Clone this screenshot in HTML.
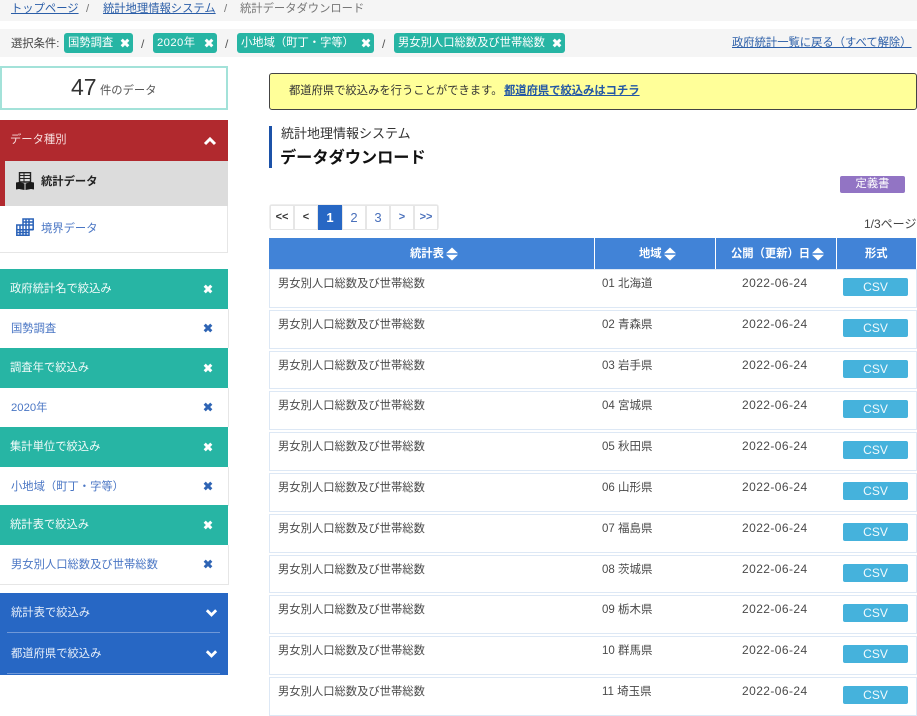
<!DOCTYPE html>
<html lang="ja"><head><meta charset="utf-8"><style>
html,body{margin:0;padding:0;background:#fff}
body{width:917px;height:714px;position:relative;overflow:hidden;font-family:"Liberation Sans","Noto Sans CJK JP",sans-serif;font-size:11.3px;color:#444}
.a{position:absolute;white-space:nowrap;line-height:16px}
.b{position:absolute}
a{color:#2b5ea8;text-decoration:underline}
.tag{position:absolute;top:33px;height:20px;background:#27b5a4;border-radius:3px;color:#fff;line-height:21px;padding-left:4px;box-sizing:border-box}
.x{position:absolute}
.s{position:absolute;top:36px;color:#555;line-height:16px;font-size:12px}
.h{position:absolute;left:0;width:228px;height:40px;background:#27b5a4;color:#f2fbfa;line-height:40px;text-indent:10px}
.i{position:absolute;left:0;width:228px;height:39px;background:#fff;border-right:1px solid #e6e6e6;box-sizing:content-box;color:#4a76c4;line-height:40px;text-indent:11px}
.row{position:absolute;left:269px;width:646px;height:36.8px;border:1px solid #dde8f5}
.row span{position:absolute;top:6px;line-height:16px;color:#4a4a4a;white-space:nowrap}
.row .c1{left:8px}.row .c2{left:332px;font-size:11.5px}.row .c3{left:472px;top:5px;font-size:12px;letter-spacing:.42px}
.row b{position:absolute;left:573px;top:8px;width:65px;height:18px;background:#45b2dc;border-radius:2px;color:#f2fafd;font-weight:normal;text-align:center;line-height:18px;font-size:12px}
.th{position:absolute;top:238px;height:31px;background:#4183d7}
.tt{position:absolute;top:246px;color:#fff;font-weight:bold;line-height:16px;white-space:nowrap}
.pg{position:absolute;top:205px;width:22px;height:23px;line-height:23px;text-align:center;border:1px solid #e6e6e6;color:#4a70bb;background:#fff;font-size:11px;font-weight:bold}
</style></head><body>

<div class="b" style="left:0;top:0;width:917px;height:21px;background:#f5f5f5"></div>
<div class="a" style="left:11px;top:1px"><a href="#">トップページ</a></div>
<div class="a" style="left:86px;top:1px;color:#777">/</div>
<div class="a" style="left:103px;top:1px"><a href="#">統計地理情報システム</a></div>
<div class="a" style="left:224px;top:1px;color:#777">/</div>
<div class="a" style="left:240px;top:1px;color:#777">統計データダウンロード</div>

<div class="b" style="left:0;top:29px;width:917px;height:28px;background:#f5f5f5"></div>
<div class="a" style="left:11px;top:36px;color:#444">選択条件:</div>
<div class="tag" style="left:64px;width:69px">国勢調査</div>
<svg class="x" style="left:120px;top:38px" width="10" height="10" viewBox="0 0 10 10"><path d="M1.700 1.700L8.300 8.300M8.300 1.700L1.700 8.300" stroke="#fff" stroke-width="3"/></svg>
<div class="s" style="left:141px">/</div>
<div class="tag" style="left:153px;width:64px"><span style="letter-spacing:.4px">2020</span>年</div>
<svg class="x" style="left:204px;top:38px" width="10" height="10" viewBox="0 0 10 10"><path d="M1.700 1.700L8.300 8.300M8.300 1.700L1.700 8.300" stroke="#fff" stroke-width="3"/></svg>
<div class="s" style="left:225px">/</div>
<div class="tag" style="left:237px;width:137px">小地域（町丁・字等）</div>
<svg class="x" style="left:361px;top:38px" width="10" height="10" viewBox="0 0 10 10"><path d="M1.700 1.700L8.300 8.300M8.300 1.700L1.700 8.300" stroke="#fff" stroke-width="3"/></svg>
<div class="s" style="left:382px">/</div>
<div class="tag" style="left:394px;width:171px">男女別人口総数及び世帯総数</div>
<svg class="x" style="left:552px;top:38px" width="10" height="10" viewBox="0 0 10 10"><path d="M1.700 1.700L8.300 8.300M8.300 1.700L1.700 8.300" stroke="#fff" stroke-width="3"/></svg>
<div class="a" style="left:732px;top:35px"><a href="#">政府統計一覧に戻る（すべて解除）</a></div>

<div class="b" style="left:0;top:66px;width:228px;height:44px;box-sizing:border-box;border:2px solid #a3e2d9;background:#fff"></div>
<div class="a" style="left:71px;top:74px;font-size:23px;line-height:26px;color:#333">47</div>
<div class="a" style="left:100px;top:83px;color:#555">件のデータ</div>

<div class="b" style="left:269px;top:73px;width:648px;height:37px;box-sizing:border-box;border:1px solid #444;border-radius:3px;background:#ffff99"></div>
<div class="a" style="left:289px;top:83px;color:#333">都道府県で絞込みを行うことができます。</div>
<div class="a" style="left:504px;top:83px"><a href="#" style="font-weight:bold;color:#2257a5">都道府県で絞込みはコチラ</a></div>

<div class="b" style="left:0;top:120px;width:228px;height:86px;background:#b1292e"></div>
<div class="a" style="left:10px;top:132px;color:#f6dcdc">データ種別</div>
<svg class="x" style="left:203px;top:136px" width="14" height="10" viewBox="0 0 14 10"><path d="M2 8L7 3L12 8" stroke="#fff" stroke-width="3" fill="none"/></svg>
<div class="b" style="left:5px;top:161px;width:223px;height:45px;background:#dcdcdc"></div>
<svg class="x" style="left:16px;top:172px" width="18" height="18" viewBox="0 0 18 18"><path d="M3.500 .7H14.500V10H3.500Z" fill="none" stroke="#222" stroke-width="1.400"/><path d="M3.500 3.500H14.500M3.500 6.500H14.500M8 1V10" stroke="#222" stroke-width="1"/><path d="M0 10.500L3 10L8.500 11.500V18L3 17L0 17.500ZM9.500 11.500L15 10L18 10.500V17.500L15 17L9.500 18Z" fill="#1a1a1a"/></svg>
<div class="a" style="left:41px;top:174px;font-weight:bold;color:#222">統計データ</div>
<div class="b" style="left:0;top:206px;width:228px;height:47px;background:#fff;border-right:1px solid #e6e6e6;border-bottom:1px solid #e6e6e6;box-sizing:border-box"></div>
<svg class="x" style="left:16px;top:218px" width="18" height="18" viewBox="0 0 18 18"><path d="M7 1H17.200V11.500H13V17.200H.8V7H7ZM.8 11.700H17M.8 14.500H13M.8 7H17M7 4H17M4 7V17M7 1V17M10 1V17M13 1V11.500" fill="none" stroke="#2a62b8" stroke-width="1.500"/></svg>
<div class="a" style="left:41px;top:221px;color:#4a76c4">境界データ</div>

<div class="h" style="top:269px">政府統計名で絞込み</div>
<svg class="x" style="left:203px;top:284px" width="10" height="10" viewBox="0 0 10 10"><path d="M1.700 1.700L8.300 8.300M8.300 1.700L1.700 8.300" stroke="#fff" stroke-width="3"/></svg>
<div class="i" style="top:309px">国勢調査</div>
<svg class="x" style="left:203px;top:323px" width="10" height="10" viewBox="0 0 10 10"><path d="M1.700 1.700L8.300 8.300M8.300 1.700L1.700 8.300" stroke="#2e64b4" stroke-width="3"/></svg>

<div class="h" style="top:348px">調査年で絞込み</div>
<svg class="x" style="left:203px;top:363px" width="10" height="10" viewBox="0 0 10 10"><path d="M1.700 1.700L8.300 8.300M8.300 1.700L1.700 8.300" stroke="#fff" stroke-width="3"/></svg>
<div class="i" style="top:388px">2020年</div>
<svg class="x" style="left:203px;top:402px" width="10" height="10" viewBox="0 0 10 10"><path d="M1.700 1.700L8.300 8.300M8.300 1.700L1.700 8.300" stroke="#2e64b4" stroke-width="3"/></svg>

<div class="h" style="top:427px">集計単位で絞込み</div>
<svg class="x" style="left:203px;top:442px" width="10" height="10" viewBox="0 0 10 10"><path d="M1.700 1.700L8.300 8.300M8.300 1.700L1.700 8.300" stroke="#fff" stroke-width="3"/></svg>
<div class="i" style="top:467px">小地域（町丁・字等）</div>
<svg class="x" style="left:203px;top:481px" width="10" height="10" viewBox="0 0 10 10"><path d="M1.700 1.700L8.300 8.300M8.300 1.700L1.700 8.300" stroke="#2e64b4" stroke-width="3"/></svg>

<div class="h" style="top:505px">統計表で絞込み</div>
<svg class="x" style="left:203px;top:520px" width="10" height="10" viewBox="0 0 10 10"><path d="M1.700 1.700L8.300 8.300M8.300 1.700L1.700 8.300" stroke="#fff" stroke-width="3"/></svg>
<div class="i" style="top:545px;border-bottom:1px solid #e6e6e6">男女別人口総数及び世帯総数</div>
<svg class="x" style="left:203px;top:559px" width="10" height="10" viewBox="0 0 10 10"><path d="M1.700 1.700L8.300 8.300M8.300 1.700L1.700 8.300" stroke="#2e64b4" stroke-width="3"/></svg>

<div class="b" style="left:0;top:593px;width:228px;height:82px;background:#2767c4"></div>
<div class="a" style="left:11px;top:605px;color:#e6eefa">統計表で絞込み</div>
<svg class="x" style="left:205px;top:608px" width="13" height="10" viewBox="0 0 14 10"><path d="M2 2L7 7L12 2" stroke="#fff" stroke-width="3" fill="none"/></svg>
<div class="b" style="left:7px;top:632px;width:213px;height:1px;background:#6f98d8"></div>
<div class="a" style="left:11px;top:646px;color:#e6eefa">都道府県で絞込み</div>
<svg class="x" style="left:205px;top:649px" width="13" height="10" viewBox="0 0 14 10"><path d="M2 2L7 7L12 2" stroke="#fff" stroke-width="3" fill="none"/></svg>
<div class="b" style="left:7px;top:673px;width:213px;height:1px;background:#6f98d8"></div>

<div class="b" style="left:269px;top:126px;width:3px;height:42px;background:#1c52a8"></div>
<div class="a" style="left:281px;top:126px;font-size:13px;color:#333">統計地理情報システム</div>
<div class="a" style="left:280px;top:148px;font-size:16.200px;line-height:20px;font-weight:bold;color:#111">データダウンロード</div>

<div class="b" style="left:840px;top:176px;width:65px;height:17px;background:#9274c4;border-radius:2px;color:#fff;text-align:center;line-height:17px">定義書</div>

<div class="b" style="left:269px;top:204px;width:170px;height:26px;border:1px solid #eee;border-radius:3px;box-sizing:border-box"></div>
<div class="pg" style="left:270px;color:#333">&lt;&lt;</div>
<div class="pg" style="left:294px;color:#333">&lt;</div>
<div class="pg" style="left:318px;background:#2767c4;color:#fff;font-size:13px;border-color:#2767c4">1</div>
<div class="pg" style="left:342px;font-size:13px;font-weight:normal">2</div>
<div class="pg" style="left:366px;font-size:13px;font-weight:normal">3</div>
<div class="pg" style="left:390px">&gt;</div>
<div class="pg" style="left:414px">&gt;&gt;</div>
<div class="a" style="left:864px;top:216px;font-size:12px;color:#444">1/3ページ</div>

<div class="th" style="left:269px;width:325px"></div>
<div class="th" style="left:595px;width:120px"></div>
<div class="th" style="left:716px;width:120px"></div>
<div class="th" style="left:837px;width:79px"></div>
<div class="tt" style="left:410px">統計表</div>
<div class="tt" style="left:639px">地域</div>
<div class="tt" style="left:731px">公開（更新）日</div>
<div class="tt" style="left:865px">形式</div>
<svg class="x" style="left:446px;top:247px" width="12" height="14" viewBox="0 0 12 14"><path d="M6 .5L12 6.300H0ZM6 13.500L0 7.700H12Z" fill="#fff"/></svg>
<svg class="x" style="left:664px;top:247px" width="12" height="14" viewBox="0 0 12 14"><path d="M6 .5L12 6.300H0ZM6 13.500L0 7.700H12Z" fill="#fff"/></svg>
<svg class="x" style="left:812px;top:247px" width="12" height="14" viewBox="0 0 12 14"><path d="M6 .5L12 6.300H0ZM6 13.500L0 7.700H12Z" fill="#fff"/></svg>

<div class="row" style="top:269px"><span class="c1">男女別人口総数及び世帯総数</span><span class="c2">01 北海道</span><span class="c3">2022-06-24</span><b>CSV</b></div>
<div class="row" style="top:309.800px"><span class="c1">男女別人口総数及び世帯総数</span><span class="c2">02 青森県</span><span class="c3">2022-06-24</span><b>CSV</b></div>
<div class="row" style="top:350.600px"><span class="c1">男女別人口総数及び世帯総数</span><span class="c2">03 岩手県</span><span class="c3">2022-06-24</span><b>CSV</b></div>
<div class="row" style="top:391.400px"><span class="c1">男女別人口総数及び世帯総数</span><span class="c2">04 宮城県</span><span class="c3">2022-06-24</span><b>CSV</b></div>
<div class="row" style="top:432.200px"><span class="c1">男女別人口総数及び世帯総数</span><span class="c2">05 秋田県</span><span class="c3">2022-06-24</span><b>CSV</b></div>
<div class="row" style="top:473px"><span class="c1">男女別人口総数及び世帯総数</span><span class="c2">06 山形県</span><span class="c3">2022-06-24</span><b>CSV</b></div>
<div class="row" style="top:513.800px"><span class="c1">男女別人口総数及び世帯総数</span><span class="c2">07 福島県</span><span class="c3">2022-06-24</span><b>CSV</b></div>
<div class="row" style="top:554.600px"><span class="c1">男女別人口総数及び世帯総数</span><span class="c2">08 茨城県</span><span class="c3">2022-06-24</span><b>CSV</b></div>
<div class="row" style="top:595.400px"><span class="c1">男女別人口総数及び世帯総数</span><span class="c2">09 栃木県</span><span class="c3">2022-06-24</span><b>CSV</b></div>
<div class="row" style="top:636.200px"><span class="c1">男女別人口総数及び世帯総数</span><span class="c2">10 群馬県</span><span class="c3">2022-06-24</span><b>CSV</b></div>
<div class="row" style="top:677px"><span class="c1">男女別人口総数及び世帯総数</span><span class="c2">11 埼玉県</span><span class="c3">2022-06-24</span><b>CSV</b></div>

</body></html>
